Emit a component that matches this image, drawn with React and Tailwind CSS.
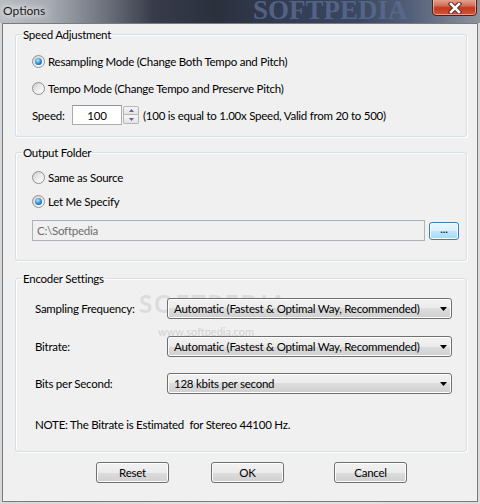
import React from "react";

const btnFace =
  "bg-[linear-gradient(#f2f2f2,#ebebeb_50%,#dddddd_50%,#cfcfcf)] shadow-[inset_0_0_0_1px_#fcfcfc] border border-[#707070] rounded-[3px]";

function Radio({ checked, label }) {
  return (
    <div className="flex h-[16px] items-center">
      <span className="flex h-[13px] w-[13px] items-center justify-center rounded-full border border-[#8e8f8f] bg-[linear-gradient(135deg,#cfcfcf,#eeeeee_55%,#ffffff)]">
        {checked && (
          <span className="h-[7px] w-[7px] rounded-full bg-[radial-gradient(circle_at_40%_35%,#b5e8ff,#2f8fdb_50%,#0b3a74)]" />
        )}
      </span>
      <span className="ml-[3px]">{label}</span>
    </div>
  );
}

function Dropdown({ value }) {
  return (
    <div className={`relative z-10 flex h-[21px] w-[285px] items-center pl-[6px] pr-[4px] ${btnFace}`}>
      <span className="flex-1 whitespace-nowrap">{value}</span>
      <svg width="7" height="4" viewBox="0 0 7 4">
        <path d="M0 0H7L3.5 4Z" fill="#000" />
      </svg>
    </div>
  );
}

function Group({ title, className, children }) {
  return (
    <fieldset className={`ml-[12px] w-[452px] rounded-[3px] border border-[#d5dfe5] shadow-[inset_1px_1px_0_#fff,1px_1px_0_#fff] ${className}`}>
      <legend className="ml-[6px] px-[1px] leading-[15px]">{title}</legend>
      {children}
    </fieldset>
  );
}

function Button({ children, className }) {
  return (
    <button className={`flex h-[21px] w-[73px] items-center justify-center ${btnFace} ${className}`}>
      {children}
    </button>
  );
}

export default function App() {
  return (
    <div className="relative h-[504px] w-[480px] overflow-hidden bg-[linear-gradient(90deg,#d6d7d9,#e4e4e4_50%,#dcdcdc)] font-['Lato','Liberation_Sans',sans-serif] text-[11.5px] leading-[15px] tracking-[-0.25px] text-black">
      {/* title bar */}
      <div className="relative h-[23px] overflow-hidden bg-[linear-gradient(90deg,#b9bcc2,#a8acb3_10%,#6d717c_22%,#383c4a_32%,#2b303d_45%,#323b52_58%,#3b4862_75%,#55617a_86%,#8e939c_100%)]">
        <span className="absolute left-[253px] top-[-5px] font-['Liberation_Serif',serif] text-[27px] font-bold leading-[30px] tracking-normal text-[#5b6c90] opacity-80">
          SOFTPEDIA
        </span>
        <span className="absolute left-[3px] top-[3px] text-[12px] tracking-normal text-[#1a1a1a] [text-shadow:0_0_6px_#fff,0_0_10px_#fff]">
          Options
        </span>
        <div className="absolute right-[3px] top-[-2px] flex h-[18px] w-[45px] items-center justify-center rounded-b-[4px] border border-[#4a2119] bg-[linear-gradient(#e7a896,#d3735c_40%,#c23a1e_55%,#d0563c)] shadow-[inset_0_0_0_1px_rgba(255,200,190,0.6)]">
          <svg width="14" height="12" viewBox="0 0 14 12" className="mt-[2px]">
            <path d="M3 2L11 10M11 2L3 10" stroke="#5a2a20" strokeWidth="4.5" strokeLinecap="square" />
            <path d="M3 2L11 10M11 2L3 10" stroke="#fff" strokeWidth="2.5" strokeLinecap="square" />
          </svg>
        </div>
      </div>

      {/* client area */}
      <div className="relative ml-[2px] h-[479px] w-[476px] border border-[#7b7b7b] bg-[#f0f0f0]">
        <span className="pointer-events-none absolute left-[136px] top-[272px] z-0 text-[24px] font-bold tracking-[2px] text-[#dcdcdc]">
          SOFTPEDIA
        </span>
        <span className="pointer-events-none absolute left-[155px] top-[300px] z-0 text-[11px] tracking-normal text-[#d2d2d2]">
          www.softpedia.com
        </span>

        <Group title="Speed Adjustment" className="mt-[3px]">
          <div className="pb-[11px] pl-[16px] pt-[11px]">
            <Radio checked label="Resampling Mode (Change Both Tempo and Pitch)" />
            <div className="mt-[11px]">
              <Radio label="Tempo Mode (Change Tempo and Preserve Pitch)" />
            </div>
            <div className="mt-[9px] flex h-[20px] items-center">
              <span className="w-[40px]">Speed:</span>
              <div className="flex h-[20px] w-[50px] items-center justify-center border border-[#abadb3] border-t-[#8f959c] bg-white">
                100
              </div>
              <div className="ml-[1px] flex h-[18px] w-[16px] flex-col">
                <div className="flex h-[9px] items-center justify-center rounded-t-[2px] border border-[#b5b5b5] bg-[linear-gradient(#f6f6f6,#e2e2e2)]">
                  <svg width="5" height="3" viewBox="0 0 5 3">
                    <path d="M0 3H5L2.5 0Z" fill="#4c6a9c" />
                  </svg>
                </div>
                <div className="flex h-[9px] items-center justify-center rounded-b-[2px] border border-t-0 border-[#b5b5b5] bg-[linear-gradient(#f6f6f6,#e2e2e2)]">
                  <svg width="5" height="3" viewBox="0 0 5 3">
                    <path d="M0 0H5L2.5 3Z" fill="#4c6a9c" />
                  </svg>
                </div>
              </div>
              <span className="ml-[4px]">(100 is equal to 1.00x Speed, Valid from 20 to 500)</span>
            </div>
          </div>
        </Group>

        <Group title="Output Folder" className="mt-[8px]">
          <div className="pb-[19px] pl-[16px] pt-[9px]">
            <Radio label="Same as Source" />
            <div className="mt-[8px]">
              <Radio checked label="Let Me Specify" />
            </div>
            <div className="mt-[11px] flex items-center">
              <div className="flex h-[21px] w-[393px] items-center border border-[#adb2b5] bg-[#f0f0f0] pl-[4px] text-[#6d6d6d]">
                C:\Softpedia
              </div>
              <button className="ml-[4px] flex h-[18px] w-[30px] items-center justify-center rounded-[3px] border border-[#3c7fb1] bg-[linear-gradient(#eaf6fd,#d9f0fc_50%,#bee6fd_50%,#a7d9f5)] pb-[4px] shadow-[inset_0_0_0_1px_#f4fbff]">
                ...
              </button>
            </div>
          </div>
        </Group>

        <Group title="Encoder Settings" className="mt-[10px]">
          <div className="pb-[19px] pl-[19px] pt-[12px]">
            <div className="flex items-center">
              <span className="w-[132px]">Sampling Frequency:</span>
              <Dropdown value="Automatic (Fastest & Optimal Way, Recommended)" />
            </div>
            <div className="mt-[17px] flex items-center">
              <span className="w-[132px]">Bitrate:</span>
              <Dropdown value="Automatic (Fastest & Optimal Way, Recommended)" />
            </div>
            <div className="mt-[16px] flex items-center">
              <span className="w-[132px]">Bits per Second:</span>
              <Dropdown value="128 kbits per second" />
            </div>
            <p className="mt-[23px] whitespace-pre">NOTE: The Bitrate is Estimated  for Stereo 44100 Hz.</p>
          </div>
        </Group>

        <div className="mt-[10px] flex">
          <Button className="ml-[93px]">Reset</Button>
          <Button className="ml-[42px]">OK</Button>
          <Button className="ml-[50px]">Cancel</Button>
        </div>
      </div>
    </div>
  );
}
